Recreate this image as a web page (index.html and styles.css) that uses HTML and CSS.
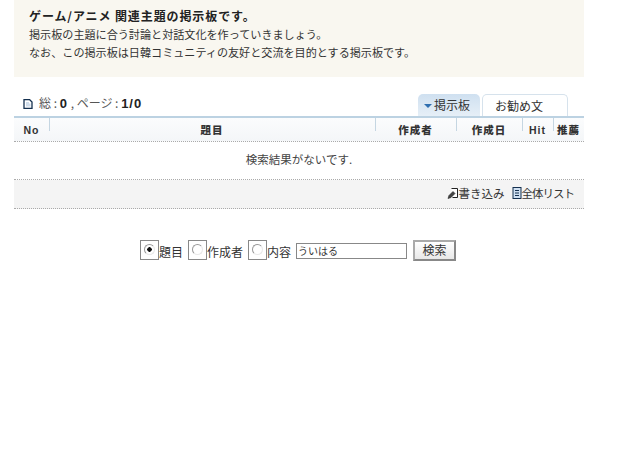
FILE: index.html
```html
<!DOCTYPE html>
<html lang="ja">
<head>
<meta charset="utf-8">
<title>掲示板</title>
<link rel="stylesheet" href="styles.css">
</head>
<body>
<div class="board">
  <div class="notice">
    <p class="notice-title">ゲーム/アニメ 関連主題の掲示板です。</p>
    <p>掲示板の主題に合う討論と対話文化を作っていきましょう。</p>
    <p>なお、この掲示板は日韓コミュニティの友好と交流を目的とする掲示板です。</p>
  </div>
  <div class="bar">
    <div class="stats">
      <svg class="icon" width="10" height="10" viewBox="0 0 10 10"><path d="M1 .5h5.500l2.500 2.500v6.500h-8z" fill="#fff" stroke="#14304f" stroke-width="1.300"/><path d="M3 3h3v1.500h1.500v3H3z" fill="#cfdcea"/></svg>
      <span>総 : <b>0</b> , ページ : <b>1/0</b></span>
    </div>
    <div class="tabs">
      <div class="tab tab-on"><i class="arrow"></i>掲示板</div>
      <div class="tab tab-off">お勧め文</div>
    </div>
  </div>
  <div class="thead">
    <div class="th c-no">No</div>
    <div class="th c-title">題目</div>
    <div class="th c-author">作成者</div>
    <div class="th c-date">作成日</div>
    <div class="th c-hit">Hit</div>
    <div class="th c-rec">推薦</div>
  </div>
  <div class="empty">検索結果がないです.</div>
  <div class="actions">
    <span class="action"><svg width="12" height="13" viewBox="0 0 12 13"><path d="M4.500 1.500h6v9h-5" fill="#fff" stroke="#222"/><path d="M1 11.500l1-3 4-4 2 2-4 4z" fill="#444" stroke="#222" stroke-width=".6"/></svg>書き込み</span>
    <span class="action action-list"><svg width="10" height="12" viewBox="0 0 10 12"><rect x="1" y=".5" width="8" height="11" fill="#cfe0f2" stroke="#14304f"/><path d="M3 3.500h4M3 6h4M3 8.500h4" stroke="#14304f"/></svg>全体リスト</span>
  </div>
  <form class="search">
    <label class="opt"><span class="radio"><span class="dot on"></span></span>題目</label>
    <label class="opt"><span class="radio"><span class="dot"></span></span>作成者</label>
    <label class="opt"><span class="radio"><span class="dot"></span></span>内容</label>
    <span class="input">ういはる</span>
    <span class="btn">検索</span>
  </form>
</div>
</body>
</html>
```

FILE: styles.css
```css
html, body { margin: 0; padding: 0; background: #fff; }
body { font-family: "Noto Sans CJK JP", "Liberation Sans", sans-serif; font-size: 12px; color: #333; }
.board { width: 570px; margin-left: 14px; }
p { margin: 0; }
.notice { height: 77px; box-sizing: border-box; padding: 7px 15px 0; background: #f9f7f0; line-height: 18px; font-size: 11.100px; color: #333; }
.notice-title { font-weight: 700; font-size: 12px; line-height: 18px; letter-spacing: .9px; color: #222; }
.bar { display: flex; justify-content: space-between; align-items: flex-end; height: 39px; }
.stats { display: flex; align-items: center; gap: 6px; padding: 0 0 3px 9px; font-size: 12px; color: #555; line-height: 18px; }
.stats b { font-family: "Liberation Sans", sans-serif; font-size: 13px; letter-spacing: 1px; color: #222; }
.icon { display: block; }
.tabs { display: flex; gap: 2px; padding-right: 16px; }
.tab { height: 22px; box-sizing: border-box; border-radius: 5px 5px 0 0; font-size: 12px; line-height: 21px; color: #333; }
.tab-on { width: 62px; background: linear-gradient(#cfe0f0, #e6eff7); padding-left: 6px; }
.tab-off { width: 86px; border: 1px solid #d6e2ec; border-bottom: 0; padding-left: 12px; }
.arrow { display: inline-block; width: 0; height: 0; border: 4px solid transparent; border-top: 4px solid #2f6fb0; border-bottom: 0; margin-right: 2px; vertical-align: 2px; }
.thead { display: flex; height: 26px; box-sizing: border-box; border-top: 2px solid #bcd2e2; border-bottom: 1px dotted #aaa; background: linear-gradient(#fbfcfd, #f4f6f8); }
.th { font-size: 10.500px; font-weight: 900; color: #333; text-align: center; line-height: 24px; position: relative; letter-spacing: 1px; }
.th + .th::before { content: ""; position: absolute; left: 0; top: 0; height: 13px; border-left: 1px solid #c5d6e2; }
.c-no { width: 35px; font-family: "Liberation Sans", sans-serif; font-weight: 700; }
.c-title { width: 326px; }
.c-author { width: 81px; }
.c-date { width: 66px; }
.c-hit { width: 31px; font-family: "Liberation Sans", sans-serif; font-weight: 700; }
.c-rec { width: 31px; }
.empty { height: 38px; box-sizing: border-box; border-bottom: 1px dotted #aaa; text-align: center; font-size: 11.500px; line-height: 34px; color: #444; }
.actions { display: flex; justify-content: flex-end; align-items: center; gap: 7px; height: 29px; box-sizing: border-box; padding: 0 10px 2px 0; background: #f4f4f4; border-bottom: 1px dotted #aaa; font-size: 11.500px; color: #333; }
.action { display: flex; align-items: center; }
.action-list { letter-spacing: -1px; }
.search { display: flex; align-items: center; gap: 5px; margin-top: 30px; padding-left: 126px; height: 22px; font-size: 12px; color: #333; }
.opt { display: flex; align-items: flex-end; gap: 0; }
.radio { width: 19px; height: 20px; box-sizing: border-box; border: 1px solid #888; padding: 3px 0 0 3px; }
.dot { display: block; width: 11px; height: 11px; box-sizing: border-box; border: 1.500px solid; border-color: #999 #e8e8e8 #e8e8e8 #999; border-radius: 50%; background: #fff; }
.dot.on { background: radial-gradient(circle, #111 0 2px, #fff 2.500px); }
.input { width: 111px; height: 16px; box-sizing: border-box; border: 1px solid #888; font-size: 10px; line-height: 14px; padding-left: 1px; margin-top: 2px; }
.btn { width: 43px; height: 21px; box-sizing: border-box; margin-left: 1px; border: 2px solid; border-color: #aaa #888 #888 #aaa; background: linear-gradient(#fff, #e8e8e8); text-align: center; line-height: 16px; font-size: 12px; }
```
